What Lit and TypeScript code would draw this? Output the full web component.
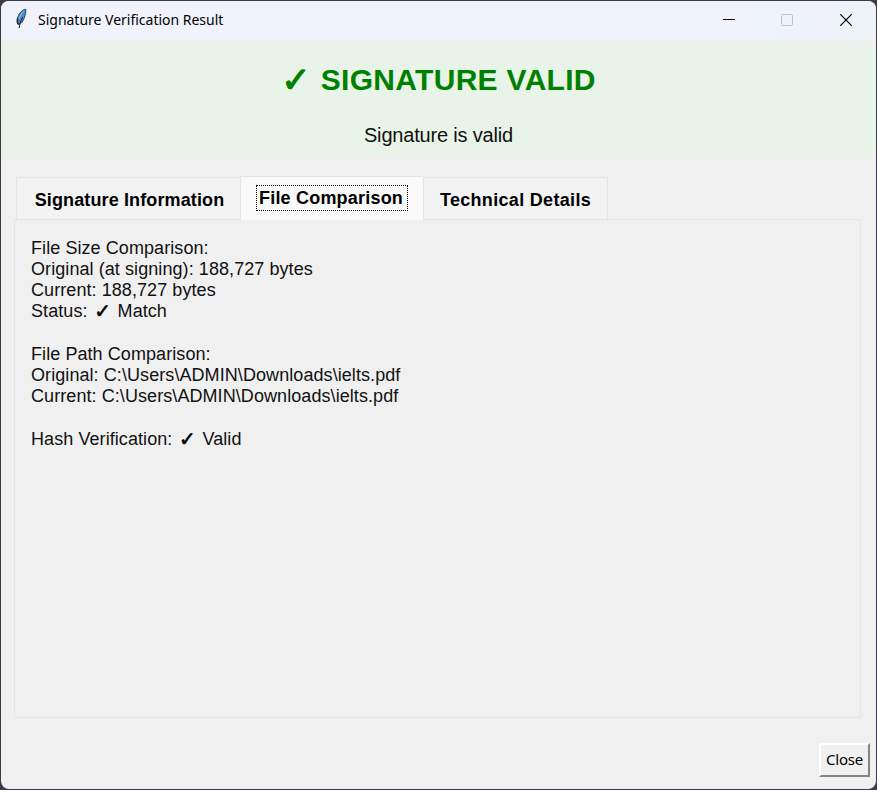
import { LitElement, html, css } from "lit";
import { customElement, state } from "lit/decorators.js";

interface Line {
  text: string;
  check?: boolean;
  after?: string;
}

const LINES: Line[] = [
  { text: "File Size Comparison:" },
  { text: "Original (at signing): 188,727 bytes" },
  { text: "Current: 188,727 bytes" },
  { text: "Status:", check: true, after: "Match" },
  { text: "" },
  { text: "File Path Comparison:" },
  { text: "Original: C:\\Users\\ADMIN\\Downloads\\ielts.pdf" },
  { text: "Current: C:\\Users\\ADMIN\\Downloads\\ielts.pdf" },
  { text: "" },
  { text: "Hash Verification:", check: true, after: "Valid" },
];

@customElement("app-root")
export class AppRoot extends LitElement {
  @state() private active = 1;

  static styles = css`
    :host {
      display: block;
      box-sizing: border-box;
      width: 877px;
      height: 790px;
      padding: 1px;
      background: #3d3b45;
      font-family: "Liberation Sans", Arial, sans-serif;
      color: #000;
      overflow: hidden;
    }
    .window {
      height: 788px;
      border-radius: 8px;
      overflow: hidden;
      background: #f0f0f0;
      display: flex;
      flex-direction: column;
    }
    .titlebar {
      height: 39px;
      flex: none;
      display: flex;
      align-items: center;
      background: linear-gradient(90deg, #f0f3fb 0 82%, #eef3f8);
      font: 14px/20px "Noto Sans", "Open Sans", sans-serif;
    }
    .feather {
      margin: 0 0 3px 12px;
      width: 16px;
      height: 22px;
    }
    .title {
      margin: 0 0 2px 9px;
      letter-spacing: -0.01px;
      flex: 1;
      white-space: nowrap;
    }
    .ctl {
      width: 58.6px;
      display: flex;
      justify-content: center;
    }
    .controls {
      display: flex;
      margin: 0 1px 1px 0;
    }
    .banner {
      margin-top: 5px;
      height: 110px;
      flex: none;
      background: #e8f4e8;
      display: flex;
      flex-direction: column;
      align-items: center;
    }
    .headline {
      margin-top: 17px;
      height: 36px;
      display: flex;
      align-items: center;
      font-size: 30px;
      line-height: 36px;
      font-weight: bold;
      color: #008000;
      white-space: nowrap;
      gap: 10px;
      letter-spacing: 0.3px;
    }
    .tick {
      font-family: "DejaVu Sans", sans-serif;
      font-weight: normal;
      -webkit-text-stroke: 0.6px currentColor;
    }
    .headline .tick {
      font-size: 35px;
      -webkit-text-stroke-width: 1.2px;
    }
    .message {
      margin-top: 25px;
      font-size: 20px;
      line-height: 25px;
      letter-spacing: -0.18px;
      color: #111;
    }
    .notebook {
      margin: 21px 15px 0 13px;
      height: 542px;
      flex: none;
      display: flex;
      flex-direction: column;
    }
    .tabs {
      display: flex;
      align-items: flex-end;
      height: 44px;
      padding-left: 2px;
      margin-bottom: -1px;
      z-index: 1;
    }
    .tab {
      box-sizing: border-box;
      height: 42px;
      margin-bottom: 1px;
      border: 1px solid #e5e5e5;
      border-bottom: 0;
      border-right: 0;
      background: #f3f3f3;
      font-size: 18px;
      line-height: 22px;
      letter-spacing: 0.13px;
      font-weight: bold;
      display: flex;
      justify-content: center;
      padding-top: 11px;
      white-space: nowrap;
    }
    .tab:nth-child(1) { width: 224px; padding-left: 2px; }
    .tab:nth-child(2) { width: 183px; letter-spacing: 0.2px; }
    .tab:nth-child(3) { width: 185px; letter-spacing: 0.32px; border-right: 1px solid #e5e5e5; }
    .tab.on {
      height: 44px;
      margin-bottom: 0;
      background: #f9f9f9;
      padding-top: 8px;
    }
    .focus {
      box-sizing: border-box;
      height: 26px;
      width: 152px;
      line-height: 25px;
      padding-left: 2px;
      border: 1px dotted #000;
    }
    .panel {
      box-sizing: border-box;
      height: 499px;
      border: 1px solid #e5e5e5;
      padding: 17.6px 16px;
      font-size: 18px;
      letter-spacing: 0.075px;
      color: #111;
    }
    .line {
      height: 21.25px;
      line-height: 21.25px;
      display: flex;
      white-space: pre;
    }
    .mark {
      width: 30px;
      text-align: center;
      font-size: 20px;
      color: #000;
    }
    .footer {
      flex: 1;
      display: flex;
      justify-content: flex-end;
      align-items: flex-start;
      padding: 25px 6px 0 0;
    }
    .close {
      box-sizing: border-box;
      width: 51px;
      height: 34px;
      padding: 0;
      background: #f0f0f0;
      color: #000;
      border: 2px solid;
      border-color: #fff #848484 #848484 #fff;
      font: 15px/28px "Noto Sans", "Open Sans", sans-serif;
      letter-spacing: -0.2px;
    }
    .close span {
      display: block;
      margin-top: -2px;
    }
  `;

  private renderLine(l: Line) {
    return html`<div class="line"><span>${l.text}</span>${l.check
      ? html`<span class="tick mark">✓</span><span>${l.after}</span>`
      : ""}</div>`;
  }

  render() {
    const tabs = ["Signature Information", "File Comparison", "Technical Details"];
    return html`
      <div class="window">
        <div class="titlebar">
          <svg class="feather" viewBox="0 0 16 22">
            <path d="M12.8 1.3C9.5 1.6 6.2 5 4.6 9.5C3.7 12.2 3.8 14.6 4.8 16.2L8.6 14.8C11.4 11.6 13 5 12.8 1.3Z" fill="#4f8fd8" stroke="#3a4048" stroke-width="1" />
            <path d="M9.6 9C8.4 11.5 7 14 6.1 20" fill="none" stroke="#22282f" stroke-width="1.1" />
            <path d="M4.6 10V15.5L6.2 16.5" fill="none" stroke="#22282f" stroke-width="1.3" />
            <path d="M10.6 3.4C8.4 5.4 7 8 6.3 11" fill="none" stroke="#9dc1e8" stroke-width=".9" />
          </svg>
          <span class="title">Signature Verification Result</span>
          <div class="controls">
            <div class="ctl"><svg width="12" height="12"><path d="M0 5.5H12" stroke="#000" /></svg></div>
            <div class="ctl"><svg width="12" height="12"><rect x=".5" y=".5" width="11" height="11" rx="1" fill="none" stroke="#bfc1c6" /></svg></div>
            <div class="ctl"><svg width="12" height="12"><path d="M.3 .3L11.7 11.7M11.7 .3L.3 11.7" stroke="#000" stroke-width="1.2" /></svg></div>
          </div>
        </div>
        <div class="banner">
          <div class="headline"><span class="tick">✓</span><span>SIGNATURE VALID</span></div>
          <div class="message">Signature is valid</div>
        </div>
        <div class="notebook">
          <div class="tabs">
            ${tabs.map((t, i) => html`<div class="tab ${i === this.active ? "on" : ""}" @click=${() => (this.active = i)}>
              <span class=${i === this.active ? "focus" : ""}>${t}</span>
            </div>`)}
          </div>
          <div class="panel">${LINES.map((l) => this.renderLine(l))}</div>
        </div>
        <div class="footer"><button class="close"><span>Close</span></button></div>
      </div>
    `;
  }
}
